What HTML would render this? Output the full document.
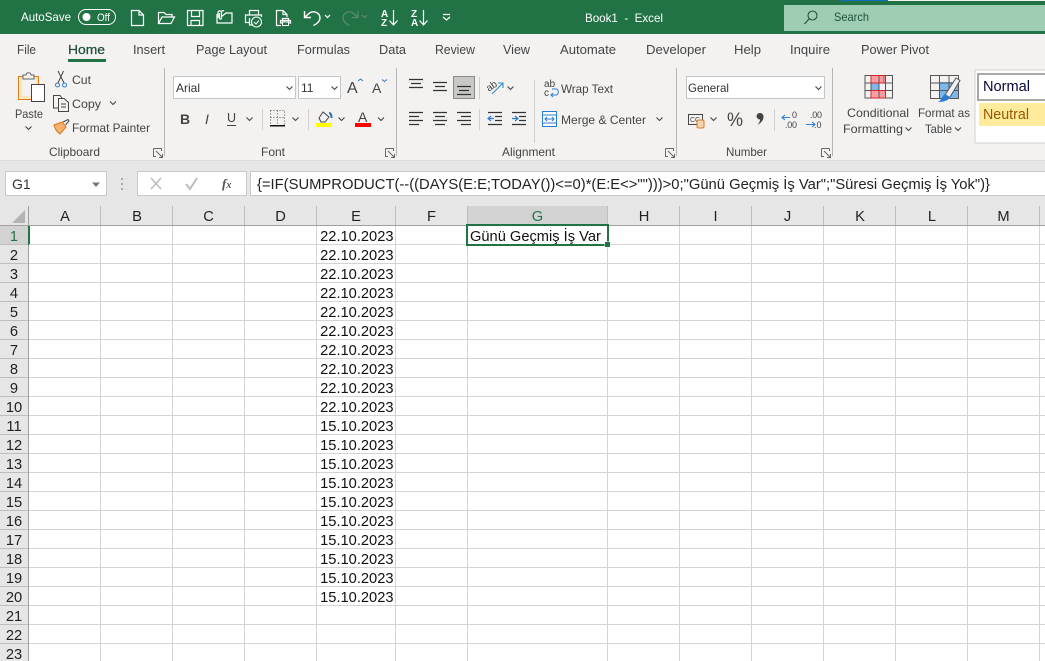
<!DOCTYPE html>
<html><head><meta charset="utf-8"><title>Book1 - Excel</title>
<style>
html,body{margin:0;padding:0;background:#fff;overflow:hidden}
svg{display:block}
text{font-family:"Liberation Sans",sans-serif;white-space:pre}
.t{font-size:12px;fill:#444}
.tab{font-size:12.5px;fill:#444}
.w{font-size:12px;fill:#fff}
.g{font-size:14.67px;fill:#111}
.h{font-size:14.67px;fill:#222;text-anchor:middle}
.r{font-size:14.67px;fill:#222;text-anchor:middle}
.d{font-size:14.67px;fill:#111;text-anchor:end}
.ic{fill:none;stroke:#444;stroke-width:1}
.wi{fill:none;stroke:#fff;stroke-width:1.2}
.di{fill:none;stroke:#5d8a70;stroke-width:1.2}
.ln{stroke:#333;stroke-width:1.2;fill:none}
.grid line{stroke:#d4d4d4;stroke-width:1}
</style></head><body>
<svg width="1045" height="661" viewBox="0 0 1045 661" xmlns="http://www.w3.org/2000/svg">
<defs>
<path id="cv" d="M-3,-1.5 L0,1.5 L3,-1.5" fill="none" stroke="#444" stroke-width="1.1"/>
<g id="dl"><path d="M0.5,0.5H8.5M0.5,0.5V8.5H3M8.5,0.5V3M3,3L9.5,9.5M9.5,6V9.5H6" fill="none" stroke="#666" stroke-width="1"/></g>
</defs>
<rect width="1045" height="661" fill="#fff"/>

<!-- title bar -->
<rect width="1045" height="34" fill="#217346"/>
<rect x="840" y="0" width="48" height="1" fill="#0f6cbd"/>
<rect x="888" y="0" width="157" height="1" fill="#f2f2f2"/>
<text class="w" x="21" y="21" textLength="50" lengthAdjust="spacingAndGlyphs">AutoSave</text>
<rect x="78.5" y="9.5" width="37" height="15" rx="7.5" fill="none" stroke="#fff" stroke-width="1"/>
<circle cx="86.5" cy="17" r="4" fill="#fff"/>
<text x="97" y="21" font-size="11" fill="#fff" textLength="13" lengthAdjust="spacingAndGlyphs">Off</text>
<!-- new -->
<path class="wi" d="M131.5,10.5H139L143.5,15V25.5H131.5ZM139,10.5V15H143.5"/>
<!-- open -->
<path class="wi" d="M158.5,23.5V12.5H164L166,14.5H172V17M158.5,23.5L162,17H174.5L171,23.5Z"/>
<!-- save -->
<path class="wi" d="M187.5,10.5H203V25.5H187.5ZM191.5,10.5V16.5H199.5V10.5M191,25.5V20.5H199.5V25.5"/>
<!-- email -->
<path class="wi" d="M217,14V23H232V13H226L221,17M217,14"/><path class="wi" d="M218,18V12.5a1.7,1.7 0 0 1 3.4,0V18a1,1 0 0 1 -2,0V13M221.5,17V12a1.5,1.5 0 0 1 2.5,-1"/>
<!-- quick print -->
<path class="wi" d="M249.5,15V10.5H258.5V15M249,22.5H245.5V15H261.5V17M249.5,18V25H253"/><circle cx="256.5" cy="22" r="5" fill="#217346" stroke="#fff" stroke-width="1.1"/><path d="M254,22L256,24L259,20.5" fill="none" stroke="#fff" stroke-width="1"/>
<!-- preview -->
<path class="wi" d="M281,25.5H276.5V10.5H283L287,14.5V17M283,10.5V14.5H287"/><path class="wi" d="M282.5,23V18.5H288.5V23M280.5,23H290.5V20.5H280.5Z"/><rect x="282.5" y="22" width="6" height="3.5" fill="#217346" stroke="#fff"/>
<!-- undo -->
<path class="wi" stroke-width="1.4" d="M304.5,11V17.5H311M305,17L309.5,13C314,10 320,13 320,18C320,21 317,24 313.5,25.5" style="stroke-width:1.4"/>
<path class="wi" d="M325,15L327.5,17.5L330,15"/>
<!-- redo -->
<path class="di" d="M358,11V17.5H352M357.5,17L353,13C348.5,10 343,13 343,18C343,21 346,24 349.5,25.5"/>
<path class="di" d="M362,15L364.5,17.5L367,15"/>
<!-- sort -->
<text x="381" y="17" font-size="10" font-weight="bold" fill="#fff">A</text><text x="381" y="26" font-size="10" font-weight="bold" fill="#fff">Z</text>
<path class="wi" d="M393.5,10V24M389.5,20.5L393.5,25L397.5,20.5"/>
<text x="411" y="17" font-size="10" font-weight="bold" fill="#fff">Z</text><text x="411" y="26" font-size="10" font-weight="bold" fill="#fff">A</text>
<path class="wi" d="M423.5,10V24M419.5,20.5L423.5,25L427.5,20.5"/>
<path class="wi" d="M443,14.5H450M443,17L446.5,20L450,17"/>
<text class="w" x="585" y="22" textLength="78" lengthAdjust="spacingAndGlyphs" font-size="12">Book1  -  Excel</text>
<rect x="784" y="5" width="261" height="26" fill="#9fcdb3"/>
<circle cx="812.5" cy="15.5" r="4.5" fill="none" stroke="#24503a" stroke-width="1.1"/><path d="M809,19L804.5,24" stroke="#24503a" stroke-width="1.2"/>
<text x="834" y="21" font-size="12" fill="#21563c" textLength="35" lengthAdjust="spacingAndGlyphs">Search</text>

<!-- ribbon -->
<rect y="34" width="1045" height="126" fill="#f3f2f1"/>
<rect y="160" width="1045" height="46" fill="#e6e6e6"/>
<rect y="160" width="1045" height="1" fill="#dcdcdc"/>
<text class="tab" x="17" y="54" textLength="19" lengthAdjust="spacingAndGlyphs">File</text>
<text class="tab" x="68" y="54" textLength="37" lengthAdjust="spacingAndGlyphs" style="fill:#1f4e36;stroke:#1f4e36;stroke-width:.25">Home</text>
<rect x="68" y="59" width="38" height="3" fill="#217346"/>
<text class="tab" x="133" y="54" textLength="32" lengthAdjust="spacingAndGlyphs">Insert</text>
<text class="tab" x="196" y="54" textLength="71" lengthAdjust="spacingAndGlyphs">Page Layout</text>
<text class="tab" x="297" y="54" textLength="53" lengthAdjust="spacingAndGlyphs">Formulas</text>
<text class="tab" x="379" y="54" textLength="27" lengthAdjust="spacingAndGlyphs">Data</text>
<text class="tab" x="435" y="54" textLength="40" lengthAdjust="spacingAndGlyphs">Review</text>
<text class="tab" x="503" y="54" textLength="27" lengthAdjust="spacingAndGlyphs">View</text>
<text class="tab" x="560" y="54" textLength="56" lengthAdjust="spacingAndGlyphs">Automate</text>
<text class="tab" x="646" y="54" textLength="60" lengthAdjust="spacingAndGlyphs">Developer</text>
<text class="tab" x="734" y="54" textLength="27" lengthAdjust="spacingAndGlyphs">Help</text>
<text class="tab" x="790" y="54" textLength="40" lengthAdjust="spacingAndGlyphs">Inquire</text>
<text class="tab" x="861" y="54" textLength="68" lengthAdjust="spacingAndGlyphs">Power Pivot</text>

<!-- separators -->
<g fill="#b5b5b5">
<rect x="164" y="68" width="1" height="88"/><rect x="396" y="68" width="1" height="88"/><rect x="676" y="68" width="1" height="88"/><rect x="832" y="68" width="1" height="88"/>
</g>
<g fill="#d0d0d0">
<rect x="534" y="80" width="1" height="63"/><rect x="479" y="77" width="1" height="22"/><rect x="479" y="109" width="1" height="21"/>
<rect x="262" y="109" width="1" height="21"/><rect x="308" y="109" width="1" height="21"/><rect x="774" y="109" width="1" height="22"/>
</g>

<!-- clipboard -->
<rect x="18.5" y="76.5" width="20" height="23" fill="#fbe6bd" stroke="#e07b1c" stroke-width="1"/>
<rect x="22" y="79" width="14" height="17" fill="#f3f2f1"/>
<path d="M23,77.5V75H26C26,72 31,72 31,75H34V79H23Z" fill="#f3f2f1" stroke="#666" stroke-width="1"/>
<rect x="31.5" y="84.5" width="13" height="17" fill="#fff" stroke="#444" stroke-width="1"/>
<text class="t" x="15" y="118" textLength="28" lengthAdjust="spacingAndGlyphs">Paste</text>
<use href="#cv" x="28.5" y="128"/>
<path class="ic" d="M58,71L64,83M63.5,71L58,83"/><circle cx="57.5" cy="85" r="2" fill="none" stroke="#2b7cd3"/><circle cx="64.5" cy="85" r="2" fill="none" stroke="#2b7cd3"/>
<text class="t" x="72" y="84" textLength="19" lengthAdjust="spacingAndGlyphs">Cut</text>
<path class="ic" d="M58,108H53.5V95.5H60L62,98M58.5,98.5H64L68.5,102.5V111.5H58.5ZM61,104H66M61,107H66"/>
<text class="t" x="72" y="108" textLength="29" lengthAdjust="spacingAndGlyphs">Copy</text>
<use href="#cv" x="113" y="103"/>
<path d="M54,125L62,122L66,127L60,134C57,132 55,129 54,125Z" fill="#f6b26b" stroke="#d9741a" stroke-width="1"/><path d="M63,122L68,119.5L69,121L65.5,125" fill="none" stroke="#444"/>
<text class="t" x="72" y="132" textLength="78" lengthAdjust="spacingAndGlyphs">Format Painter</text>
<text class="t" x="49" y="156" textLength="51" lengthAdjust="spacingAndGlyphs">Clipboard</text>
<use href="#dl" x="153" y="148"/>

<!-- font -->
<rect x="173.5" y="76.5" width="122" height="22" fill="#fff" stroke="#c6c6c6"/>
<text x="176" y="92" font-size="12" fill="#333">Arial</text>
<use href="#cv" x="289.5" y="88"/>
<rect x="298.5" y="76.5" width="42" height="22" fill="#fff" stroke="#c6c6c6"/>
<text x="301" y="92" font-size="12" fill="#333">11</text>
<use href="#cv" x="334.5" y="88"/>
<text x="347" y="93" font-size="16" fill="#444">A</text><path d="M358,81L360.5,79L363,81" fill="none" stroke="#2b7cd3"/>
<text x="372" y="93" font-size="14" fill="#444">A</text><path d="M382,79.5L384.5,81.5L387,79.5" fill="none" stroke="#2b7cd3"/>
<text x="180" y="124" font-size="14" font-weight="bold" fill="#444">B</text>
<text x="205" y="124" font-size="14" font-style="italic" fill="#444">I</text>
<text x="227" y="122" font-size="12.5" fill="#444">U</text><rect x="227" y="125" width="9" height="1" fill="#444"/>
<use href="#cv" x="249.5" y="119"/>
<path d="M270.5,110.5H284.5V124.5M270.5,110.5V124.5M277.5,110.5V124.5M270.5,117.5H284.5" fill="none" stroke="#555" stroke-dasharray="1 2"/>
<rect x="270" y="125" width="15" height="1.5" fill="#111"/>
<use href="#cv" x="295.5" y="119"/>
<path d="M319,118L323,112L329,117L325,122H321Z" fill="none" stroke="#444"/><path d="M329,113C331,113 331.5,115 331.5,118" fill="none" stroke="#1f6fb5" stroke-width="2"/>
<rect x="316" y="123" width="16" height="4" fill="#ffff00"/>
<use href="#cv" x="341.5" y="119"/>
<text x="358" y="122" font-size="14" fill="#444">A</text>
<rect x="355" y="123" width="16" height="4" fill="#ff0000"/>
<use href="#cv" x="381" y="119"/>
<text class="t" x="261" y="156" textLength="24" lengthAdjust="spacingAndGlyphs">Font</text>
<use href="#dl" x="385" y="148"/>

<!-- alignment -->
<g class="ln">
<path d="M409,79.5H423M411,83.5H421M409,87.5H423"/>
<path d="M433,82.5H447M435,86.5H445M433,90.5H447"/>
</g>
<rect x="453.5" y="76.5" width="21" height="22" fill="#c8c8c6" stroke="#8a8a8a"/>
<g class="ln">
<path d="M457,86.5H471M459,90.5H469M457,94.5H471"/>
<path d="M409,112.5H423M409,116.5H419M409,120.5H423M409,124.5H419"/>
<path d="M433,112.5H447M435,116.5H445M433,120.5H447M435,124.5H445"/>
<path d="M457,112.5H471M461,116.5H471M457,120.5H471M461,124.5H471"/>
<path d="M488,112.5H502M495,116.5H502M495,120.5H502M488,124.5H502"/>
<path d="M512,112.5H526M519,116.5H526M519,120.5H526M512,124.5H526"/>
</g>
<path d="M488,118.5H494M491,116L488,118.5L491,121" fill="none" stroke="#2b7cd3" stroke-width="1.2"/>
<path d="M512,118.5H518M515,116L518,118.5L515,121" fill="none" stroke="#2b7cd3" stroke-width="1.2"/>
<text x="487" y="90" font-size="10" fill="#444" transform="rotate(-35 491 88)">ab</text>
<path d="M492,94L503,83M498,83H503V88" fill="none" stroke="#2b8ed3" stroke-width="1.1"/>
<use href="#cv" x="510.5" y="88"/>
<text x="544" y="87" font-size="10" fill="#444">ab</text><text x="544" y="96" font-size="10" fill="#444">c</text>
<path d="M551,95H556C559,95 559,89 556,89H552M553,93L551,95L553,97" fill="none" stroke="#2b7cd3" stroke-width="1"/>
<text class="t" x="561" y="93" textLength="52" lengthAdjust="spacingAndGlyphs">Wrap Text</text>
<rect x="542.5" y="111.5" width="14" height="15" fill="#fff" stroke="#2b7cd3"/>
<path d="M545,119H554M547,117L545,119L547,121M552,117L554,119L552,121M542.5,115H556.5M542.5,123H556.5" fill="none" stroke="#2b7cd3"/>
<text class="t" x="561" y="124" textLength="85" lengthAdjust="spacingAndGlyphs">Merge &amp; Center</text>
<use href="#cv" x="659.5" y="119"/>
<text class="t" x="502" y="156" textLength="53" lengthAdjust="spacingAndGlyphs">Alignment</text>
<use href="#dl" x="665" y="148"/>

<!-- number -->
<rect x="686.5" y="76.5" width="138" height="22" fill="#fff" stroke="#c6c6c6"/>
<text x="688" y="92" font-size="12" fill="#333" textLength="41" lengthAdjust="spacingAndGlyphs">General</text>
<use href="#cv" x="818.5" y="88"/>
<rect x="688.5" y="114.5" width="14" height="10" fill="none" stroke="#444"/>
<text x="690" y="122" font-size="7" fill="#444">CC</text>
<rect x="697" y="120" width="7" height="8" rx="1.5" fill="#f3d3b4" stroke="#e07b1c"/>
<use href="#cv" x="713.5" y="119"/>
<text x="727" y="126" font-size="19" fill="#444" textLength="16" lengthAdjust="spacingAndGlyphs">%</text>
<path d="M756.5,116a3.5,3.5 0 1 1 7,1C763.5,120 761,123 757.5,125C759.5,122.5 760,121 760,119.5a3.5,3.5 0 0 1 -3.5,-3.5Z" fill="#444"/>
<text x="785" y="118" font-size="9" fill="#444" textLength="12">  0</text><text x="785" y="128" font-size="9" fill="#444" textLength="12">.00</text>
<path d="M782,117.5H790M785,115L782,117.5L785,120" fill="none" stroke="#2b7cd3" stroke-width="1.1"/>
<text x="810" y="118" font-size="9" fill="#444" textLength="12">.00</text><text x="814" y="128" font-size="9" fill="#444">.0</text>
<path d="M806,124.5H815M812,122L815,124.5L812,127" fill="none" stroke="#2b7cd3" stroke-width="1.1"/>
<text class="t" x="726" y="156" textLength="41" lengthAdjust="spacingAndGlyphs">Number</text>
<use href="#dl" x="821" y="148"/>

<!-- styles -->
<rect x="871" y="75.5" width="13" height="7.5" fill="#ff9da3"/><rect x="871" y="83" width="8" height="7.5" fill="#7db8ea"/><rect x="871" y="90.5" width="14" height="7.5" fill="#ff9da3"/>
<path d="M865,75.5H892.5V98H865ZM865,83H892.5M865,90.5H892.5M871,75.5V98M879,75.5V98M885.5,75.5V98" fill="none" stroke="#555"/>
<path d="M871,75.5H884V83H871ZM871,90.5H885.5V98H871Z" fill="none" stroke="#d8222a"/>
<text class="t" x="847" y="117" textLength="62" lengthAdjust="spacingAndGlyphs">Conditional</text>
<text class="t" x="843" y="133" textLength="60" lengthAdjust="spacingAndGlyphs">Formatting</text>
<use href="#cv" x="908.5" y="129"/>
<rect x="940" y="82" width="19" height="17" fill="#7db8ea"/>
<path d="M930.5,75.5H958.5V98.5H930.5ZM930.5,83H958.5M930.5,90.5H958.5M939.5,75.5V98.5M949,75.5V98.5" fill="none" stroke="#555"/>
<path d="M945,95L956,78L960,80.5L950,97" fill="#f3f2f1" stroke="#555"/>
<path d="M938,102C941,101 942,96 945,94L950,97C948,101 943,102 938,102Z" fill="#2b7cd3"/>
<text class="t" x="918" y="117" textLength="52" lengthAdjust="spacingAndGlyphs">Format as</text>
<text class="t" x="925" y="133" textLength="27" lengthAdjust="spacingAndGlyphs">Table</text>
<use href="#cv" x="958" y="129"/>
<rect x="975" y="70" width="75" height="73" fill="#fff" stroke="#d0d0d0"/>
<rect x="978" y="74" width="70" height="26" fill="#fff" stroke="#a8a8a8" stroke-width="2"/>
<text x="983" y="91" font-size="14.67" fill="#06063a" textLength="47" lengthAdjust="spacingAndGlyphs">Normal</text>
<rect x="979" y="103" width="66" height="23" fill="#ffeb9c"/>
<text x="983" y="119" font-size="14.67" fill="#9c5700" textLength="46" lengthAdjust="spacingAndGlyphs">Neutral</text>

<!-- formula bar -->
<rect x="5.5" y="171.5" width="101" height="24" fill="#fff" stroke="#c8c8c8"/>
<text x="12" y="189" font-size="14" fill="#333">G1</text>
<path d="M92,182.5H100L96,187Z" fill="#777"/>
<g fill="#aaa"><rect x="121" y="178" width="2" height="2"/><rect x="121" y="183" width="2" height="2"/><rect x="121" y="188" width="2" height="2"/></g>
<rect x="137.5" y="171.5" width="109" height="24" fill="#fff" stroke="#c8c8c8"/>
<path d="M151,178L161,189M161,178L151,189" stroke="#bdbdbd" stroke-width="1.6" fill="none"/>
<path d="M186,184L190,189L197,178" stroke="#bdbdbd" stroke-width="2" fill="none"/>
<text x="222" y="188" font-size="13" font-style="italic" font-weight="bold" fill="#555" style="font-family:'Liberation Serif',serif">f<tspan font-size="10">x</tspan></text>
<rect x="250.5" y="171.5" width="800" height="24" fill="#fff" stroke="#c8c8c8"/>
<text class="g" x="257" y="189" textLength="733" lengthAdjust="spacingAndGlyphs" style="fill:#222">{=IF(SUMPRODUCT(--((DAYS(E:E;TODAY())&lt;=0)*(E:E&lt;&gt;"")))&gt;0;"Günü Geçmiş İş Var";"Süresi Geçmiş İş Yok")}</text>

<!-- headers -->
<rect y="206" width="1045" height="19" fill="#e6e6e6"/>
<rect x="0" y="206" width="28" height="455" fill="#e6e6e6"/>
<rect x="467" y="206" width="141" height="19" fill="#d2d2d2"/>
<rect x="0" y="226" width="28" height="18" fill="#d2d2d2"/>
<path d="M25,210V223H12Z" fill="#b4b4b4"/>
<rect x="0" y="225" width="1045" height="1" fill="#a0a0a0"/>
<rect x="28" y="206" width="1" height="455" fill="#a0a0a0"/>
<rect x="28" y="226" width="2" height="19" fill="#217346"/>
<g fill="#bdbdbd">
<rect x="100" y="206" width="1" height="19"/><rect x="172" y="206" width="1" height="19"/><rect x="244" y="206" width="1" height="19"/><rect x="316" y="206" width="1" height="19"/><rect x="395" y="206" width="1" height="19"/><rect x="467" y="206" width="1" height="19"/><rect x="607" y="206" width="1" height="19"/><rect x="679" y="206" width="1" height="19"/><rect x="751" y="206" width="1" height="19"/><rect x="823" y="206" width="1" height="19"/><rect x="895" y="206" width="1" height="19"/><rect x="967" y="206" width="1" height="19"/><rect x="1039" y="206" width="1" height="19"/>
</g>
<g class="h">
<text class="h" x="65" y="221">A</text><text class="h" x="137" y="221">B</text><text class="h" x="208.5" y="221">C</text><text class="h" x="280.5" y="221">D</text><text class="h" x="356" y="221">E</text><text class="h" x="431.5" y="221">F</text><text class="h" x="537.5" y="221" style="fill:#217346">G</text><text class="h" x="644" y="221">H</text><text class="h" x="715.5" y="221">I</text><text class="h" x="787.5" y="221">J</text><text class="h" x="860" y="221">K</text><text class="h" x="932" y="221">L</text><text class="h" x="1003.5" y="221">M</text>
</g>

<!-- grid -->
<g class="grid">
<line x1="29" x2="1045" y1="244.5" y2="244.5"/><line x1="29" x2="1045" y1="263.5" y2="263.5"/><line x1="29" x2="1045" y1="282.5" y2="282.5"/><line x1="29" x2="1045" y1="301.5" y2="301.5"/><line x1="29" x2="1045" y1="320.5" y2="320.5"/><line x1="29" x2="1045" y1="339.5" y2="339.5"/><line x1="29" x2="1045" y1="358.5" y2="358.5"/><line x1="29" x2="1045" y1="377.5" y2="377.5"/><line x1="29" x2="1045" y1="396.5" y2="396.5"/><line x1="29" x2="1045" y1="415.5" y2="415.5"/><line x1="29" x2="1045" y1="434.5" y2="434.5"/><line x1="29" x2="1045" y1="453.5" y2="453.5"/><line x1="29" x2="1045" y1="472.5" y2="472.5"/><line x1="29" x2="1045" y1="491.5" y2="491.5"/><line x1="29" x2="1045" y1="510.5" y2="510.5"/><line x1="29" x2="1045" y1="529.5" y2="529.5"/><line x1="29" x2="1045" y1="548.5" y2="548.5"/><line x1="29" x2="1045" y1="567.5" y2="567.5"/><line x1="29" x2="1045" y1="586.5" y2="586.5"/><line x1="29" x2="1045" y1="605.5" y2="605.5"/><line x1="29" x2="1045" y1="624.5" y2="624.5"/><line x1="29" x2="1045" y1="643.5" y2="643.5"/>
<line y1="226" y2="661" x1="100.5" x2="100.5"/><line y1="226" y2="661" x1="172.5" x2="172.5"/><line y1="226" y2="661" x1="244.5" x2="244.5"/><line y1="226" y2="661" x1="316.5" x2="316.5"/><line y1="226" y2="661" x1="395.5" x2="395.5"/><line y1="226" y2="661" x1="467.5" x2="467.5"/><line y1="226" y2="661" x1="607.5" x2="607.5"/><line y1="226" y2="661" x1="679.5" x2="679.5"/><line y1="226" y2="661" x1="751.5" x2="751.5"/><line y1="226" y2="661" x1="823.5" x2="823.5"/><line y1="226" y2="661" x1="895.5" x2="895.5"/><line y1="226" y2="661" x1="967.5" x2="967.5"/><line y1="226" y2="661" x1="1039.5" x2="1039.5"/>
</g>
<g fill="#bdbdbd">
<rect x="0" y="244" width="28" height="1"/><rect x="0" y="263" width="28" height="1"/><rect x="0" y="282" width="28" height="1"/><rect x="0" y="301" width="28" height="1"/><rect x="0" y="320" width="28" height="1"/><rect x="0" y="339" width="28" height="1"/><rect x="0" y="358" width="28" height="1"/><rect x="0" y="377" width="28" height="1"/><rect x="0" y="396" width="28" height="1"/><rect x="0" y="415" width="28" height="1"/><rect x="0" y="434" width="28" height="1"/><rect x="0" y="453" width="28" height="1"/><rect x="0" y="472" width="28" height="1"/><rect x="0" y="491" width="28" height="1"/><rect x="0" y="510" width="28" height="1"/><rect x="0" y="529" width="28" height="1"/><rect x="0" y="548" width="28" height="1"/><rect x="0" y="567" width="28" height="1"/><rect x="0" y="586" width="28" height="1"/><rect x="0" y="605" width="28" height="1"/><rect x="0" y="624" width="28" height="1"/><rect x="0" y="643" width="28" height="1"/>
</g>

<!-- row numbers -->
<text class="r" x="14" y="241" style="fill:#217346">1</text><text class="r" x="14" y="260">2</text><text class="r" x="14" y="279">3</text><text class="r" x="14" y="298">4</text><text class="r" x="14" y="317">5</text><text class="r" x="14" y="336">6</text><text class="r" x="14" y="355">7</text><text class="r" x="14" y="374">8</text><text class="r" x="14" y="393">9</text><text class="r" x="14" y="412">10</text><text class="r" x="14" y="431">11</text><text class="r" x="14" y="450">12</text><text class="r" x="14" y="469">13</text><text class="r" x="14" y="488">14</text><text class="r" x="14" y="507">15</text><text class="r" x="14" y="526">16</text><text class="r" x="14" y="545">17</text><text class="r" x="14" y="564">18</text><text class="r" x="14" y="583">19</text><text class="r" x="14" y="602">20</text><text class="r" x="14" y="621">21</text><text class="r" x="14" y="640">22</text><text class="r" x="14" y="659">23</text>

<!-- dates -->
<text class="d" x="393.5" y="241">22.10.2023</text><text class="d" x="393.5" y="260">22.10.2023</text><text class="d" x="393.5" y="279">22.10.2023</text><text class="d" x="393.5" y="298">22.10.2023</text><text class="d" x="393.5" y="317">22.10.2023</text><text class="d" x="393.5" y="336">22.10.2023</text><text class="d" x="393.5" y="355">22.10.2023</text><text class="d" x="393.5" y="374">22.10.2023</text><text class="d" x="393.5" y="393">22.10.2023</text><text class="d" x="393.5" y="412">22.10.2023</text>
<text class="d" x="393.5" y="431">15.10.2023</text><text class="d" x="393.5" y="450">15.10.2023</text><text class="d" x="393.5" y="469">15.10.2023</text><text class="d" x="393.5" y="488">15.10.2023</text><text class="d" x="393.5" y="507">15.10.2023</text><text class="d" x="393.5" y="526">15.10.2023</text><text class="d" x="393.5" y="545">15.10.2023</text><text class="d" x="393.5" y="564">15.10.2023</text><text class="d" x="393.5" y="583">15.10.2023</text><text class="d" x="393.5" y="602">15.10.2023</text>

<!-- selection -->
<rect x="467" y="225" width="141" height="20" fill="#fff" stroke="#217346" stroke-width="2"/>
<rect x="604.5" y="241.5" width="6" height="6" fill="#fff"/>
<rect x="605" y="242" width="5" height="5" fill="#217346"/>
<text class="g" x="470" y="241">Günü Geçmiş İş Var</text>
</svg>
</body></html>
